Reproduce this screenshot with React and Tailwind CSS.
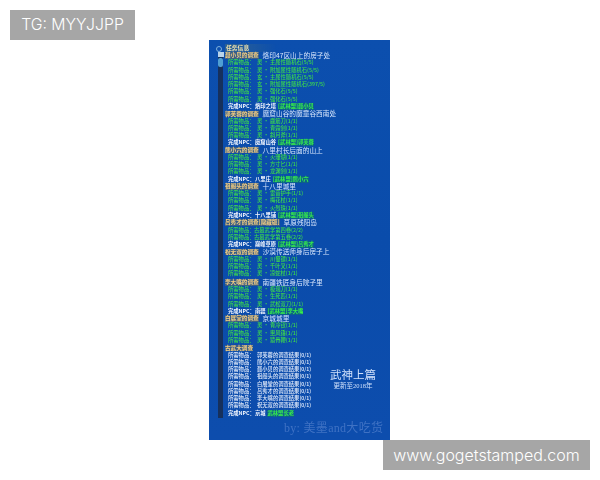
const items = [
  ["h", "聂小贝的调查", "烙印47区山上的房子处"],
  ["i", "灵 · 主属性随机石(5/5)"], ["i", "灵 · 附加属性随机石(5/5)"], ["i", "玄 · 主属性随机石(5/5)"], ["i", "玄 · 附加属性随机石(397/5)"], ["i", "灵 · 强化石(5/5)"], ["i", "灵 · 强化石(5/5)"],
  ["n", "烙印之塔", "[武林盟]聂小贝"],
  ["h", "郭芙蓉的调查", "魔窟山谷的魔童谷西南处"],
  ["i", "灵 · 鹿筋刀(1/1)"], ["i", "灵 · 青霜剑(1/1)"], ["i", "灵 · 斜月斧(1/1)"],
  ["n", "魔窟山谷", "[武林盟]郭芙蓉"],
  ["h", "熊小六的调查", "八里村长后面的山上"],
  ["i", "灵 · 火珊瑚(1/1)"], ["i", "灵 · 方寸匕(1/1)"], ["i", "灵 · 龙渊剑(1/1)"],
  ["n", "八里庄", "[武林盟]熊小六"],
  ["h", "祖阁头的调查", "十八里城里"],
  ["i", "灵 · 雷音护手(1/1)"], ["i", "灵 · 梅花杖(1/1)"], ["i", "灵 · 火烈珠(1/1)"],
  ["n", "十八里铺", "[武林盟]祖阁头"],
  ["h", "吕秀才的调查[隐藏版]", "草原残阳岛"],
  ["b", "古墓武学第四卷(2/2)"], ["b", "古墓武学第五卷(2/2)"],
  ["n", "巅峰草原", "[武林盟]吕秀才"],
  ["h", "祝无双的调查", "沙漠传送师身后房子上"],
  ["i", "灵 · 川蜀镖(1/1)"], ["i", "灵 · 千叶叉(1/1)"], ["i", "灵 · 凉蛇杖(1/1)"],
  ["h", "李大嘴的调查", "南疆铁匠身后院子里", true],
  ["i", "灵 · 极瑞刀(1/1)"], ["i", "灵 · 生死匹(1/1)"], ["i", "灵 · 武松双刀(1/1)"],
  ["n", "南疆", "[武林盟]李大嘴"],
  ["h", "白展堂的调查", "京城城里"],
  ["i", "灵 · 青冷钗(1/1)"], ["i", "灵 · 惠风锤(1/1)"], ["i", "灵 · 猿骨鞭(1/1)"],
  ["h", "古武大调查", ""],
  ["w", "郭芙蓉的调查结果(0/1)"], ["w", "熊小六的调查结果(0/1)"], ["w", "聂小贝的调查结果(0/1)"], ["w", "祖阁头的调查结果(0/1)"], ["w", "白展堂的调查结果(0/1)"], ["w", "吕秀才的调查结果(0/1)"], ["w", "李大嘴的调查结果(0/1)"], ["w", "祝无双的调查结果(0/1)"],
  ["n", "京城", "武林盟长老"],
];

const cjk = { fontFamily: '"Noto Sans CJK SC", sans-serif' };
const serif = { fontFamily: '"Liberation Serif", "Noto Sans CJK SC", serif' };
const sans = { fontFamily: 'Inter, "Liberation Sans", sans-serif' };

function Row({ row }) {
  const [type, a, b, c] = row;
  if (type === "h") {
    return (
      <div className={`flex items-center h-[7.27px] whitespace-nowrap ${c ? "mt-[1.5px]" : ""}`}>
        <span className="text-[5.6px] leading-[6.5px] h-[6.5px] text-[#f6cf82] bg-[#6b6f5e]/50 font-bold">{a}</span>
        {b && <span className="ml-[4px] text-[6.7px] leading-[7px] h-[7px] text-[#d8e6fc]">{b}</span>}
      </div>
    );
  }
  if (type === "n") {
    return (
      <div className="flex items-center h-[7.27px] pl-[3px] text-[5.3px] leading-[7px] whitespace-nowrap text-[#f4f8ff] font-bold">
        <span>完成NPC：</span>
        <span>{a}</span>
        <span className="ml-[2px] text-[#38f04a] bg-[#0f8a3a]/30">{b}</span>
      </div>
    );
  }
  const color = type === "w" ? "text-[#e6eefc]" : "text-[#3ddc4a]";
  return (
    <div className={`flex items-center h-[7.27px] pl-[3px] text-[5.3px] leading-[7px] font-medium whitespace-nowrap ${color}`}>
      <span className={type === "b" ? "w-[26px]" : "w-[29px]"}>所需物品：</span>
      <span>{a}</span>
    </div>
  );
}

export default function App() {
  return (
    <div className="w-[600px] h-[480px] bg-white relative overflow-hidden" style={cjk}>
      <div className="flex items-start pt-[10px] pl-[10px]">
        <div className="w-[125px] h-[30px] bg-[#a6a6a6] flex items-center justify-center text-white text-[15.8px] font-light" style={sans}>
          TG: MYYJJPP
        </div>
      </div>

      <div className="ml-[209px] w-[181px] h-[400px] bg-gradient-to-b from-[#0c4fae] via-[#0a4cab] to-[#0d4dad] flex flex-col overflow-hidden">
        <div className="h-[12px] flex items-end pl-[7px] shrink-0 blur-[0.4px]">
          <span className="w-[6px] h-[6px] rounded-full border border-[#7fb0dc]" />
          <div className="ml-[3px] w-[52px] h-[8px] bg-gradient-to-r from-[#2f6292] to-transparent flex items-center pl-[1px] text-[5.8px] text-[#f0e2ae] font-bold">
            任务信息
          </div>
        </div>
        <div className="flex flex-1 pl-[9px] min-h-0">
          <div className="w-[5px] mr-[2px] flex flex-col items-center shrink-0 h-[366px] bg-[#16305c] blur-[0.4px]">
            <div className="w-[6px] h-[5px] bg-[#b9d3ea]" />
            <div className="w-[5px] h-[9px] mt-[1px] rounded-[2px] bg-[#4f9fd4]" />
          </div>
          <div className="flex-1 min-w-0 flex flex-col blur-[0.4px]">
            {items.map((r, i) => <Row key={i} row={r} />)}
          </div>
        </div>
      </div>

      <div className="absolute left-[329px] top-[368px] w-[48px] text-center text-[#cfe0fb] blur-[0.3px]" style={serif}>
        <div className="text-[11.5px] leading-[14px] whitespace-nowrap">武神上篇</div>
        <div className="text-[6.5px] leading-[7px] whitespace-nowrap">更新至2018年</div>
      </div>
      <div className="absolute left-[284px] top-[421px] text-[12px] leading-[14px] tracking-[0.3px] text-[#3f72c4] whitespace-nowrap blur-[0.4px]" style={serif}>
        by:  美墨and大吃货
      </div>

      <div className="flex justify-end pr-[10px]">
        <div className="w-[207px] h-[30px] bg-[#a6a6a6] flex items-center justify-center text-white text-[16px] font-light" style={sans}>
          www.gogetstamped.com
        </div>
      </div>
    </div>
  );
}
